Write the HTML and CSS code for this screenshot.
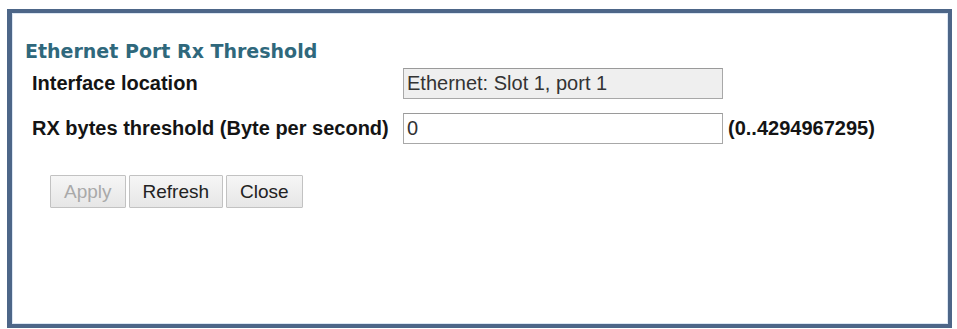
FILE: index.html
```html
<!DOCTYPE html>
<html>
<head>
<meta charset="utf-8">
<link rel="stylesheet" href="styles.css">
</head>
<body>
<div class="frame">
  <h1 class="title">Ethernet Port Rx Threshold</h1>
  <div class="form">
    <div class="label">Interface location</div>
    <input class="field readonly" type="text" value="Ethernet: Slot 1, port 1" readonly>
    <div class="hint"></div>
    <div class="label">RX bytes threshold (Byte per second)</div>
    <input class="field" type="text" value="0">
    <div class="hint">(0..4294967295)</div>
  </div>
  <div class="buttons">
    <button class="btn disabled" type="button">Apply</button>
    <button class="btn" type="button">Refresh</button>
    <button class="btn" type="button">Close</button>
  </div>
</div>
</body>
</html>
```

FILE: styles.css
```css
html, body {
  margin: 0;
  padding: 0;
  background: #ffffff;
}

.frame {
  box-sizing: border-box;
  margin: 9px 0 0 7px;
  width: 945px;
  height: 319px;
  border: 4px solid #4d6688;
  border-left-width: 5px;
  box-shadow: inset 0 0 0 1px #dbe6f3;
  padding: 27px 0 0 0;
  background: #ffffff;
}

.title {
  margin: 0 0 0 13px;
  font-family: "DejaVu Sans", Verdana, sans-serif;
  font-weight: bold;
  font-size: 19px;
  line-height: 22px;
  color: #2f687c;
}

.form {
  display: grid;
  grid-template-columns: 366px 320px auto;
  column-gap: 5px;
  row-gap: 14px;
  align-items: center;
  margin: 6px 0 0 20px;
}

.label, .hint {
  font-family: "Liberation Sans", Arial, sans-serif;
  font-weight: bold;
  font-size: 20px;
  color: #141414;
  line-height: 23px;
}

.field {
  box-sizing: border-box;
  width: 320px;
  height: 31px;
  margin: 0;
  padding: 0 0 0 3px;
  border: 1px solid #a8a8a8;
  border-top-color: #9a9a9a;
  background: #ffffff;
  font-family: "Liberation Sans", Arial, sans-serif;
  font-size: 20px;
  color: #333333;
  outline: none;
}

.field.readonly {
  background: #efefef;
}

.buttons {
  display: flex;
  gap: 3px;
  margin: 31px 0 0 38px;
}

.btn {
  box-sizing: border-box;
  height: 33px;
  margin: 0;
  padding: 0 13px;
  border: 1px solid #c2c2c2;
  border-radius: 1px;
  background: linear-gradient(#f6f6f6, #e6e6e6);
  font-family: "Liberation Sans", Arial, sans-serif;
  font-size: 19px;
  color: #222222;
}

.btn.disabled {
  color: #a9a9a9;
}
```
